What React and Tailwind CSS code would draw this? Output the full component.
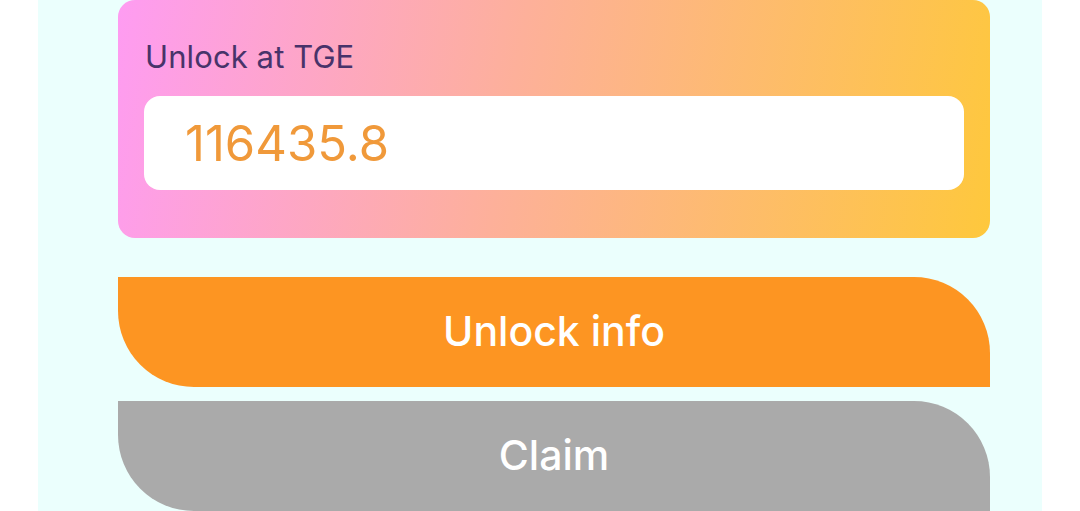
const App = () => {
  return (
    <div
      className="w-full h-[511px] bg-white overflow-hidden"
      style={{ fontFamily: "Inter, 'Noto Sans', sans-serif" }}
    >
      <div className="ml-[38px] w-[1004px] h-full bg-[#ebfffd] pl-[80px] pr-[52px]">
        <div className="rounded-[17px] bg-[linear-gradient(100deg,#fe9cf2_0%,#fdb09a_45%,#fec83c_100%)] px-[26px] pt-[37px] pb-[48px]">
          <div className="pl-[1px] text-[31px] leading-[40px] tracking-[0.1px] text-[#48336a]">
            Unlock at TGE
          </div>
          <div className="mt-[19px] h-[94px] rounded-[16px] bg-white flex items-center pl-[41px]">
            <span className="text-[49px] leading-none text-[#f0993a]">
              116435.8
            </span>
          </div>
        </div>
        <div className="mt-[39px] flex flex-col gap-[14px]">
          <button className="h-[110px] w-full bg-[#fd9522] rounded-tr-[76px] rounded-bl-[76px] text-white text-[41px] font-medium">
            Unlock info
          </button>
          <button className="h-[110px] w-full bg-[#aaaaaa] rounded-tr-[76px] rounded-bl-[76px] text-white text-[41px] font-medium">
            Claim
          </button>
        </div>
      </div>
    </div>
  );
};

export default App;
